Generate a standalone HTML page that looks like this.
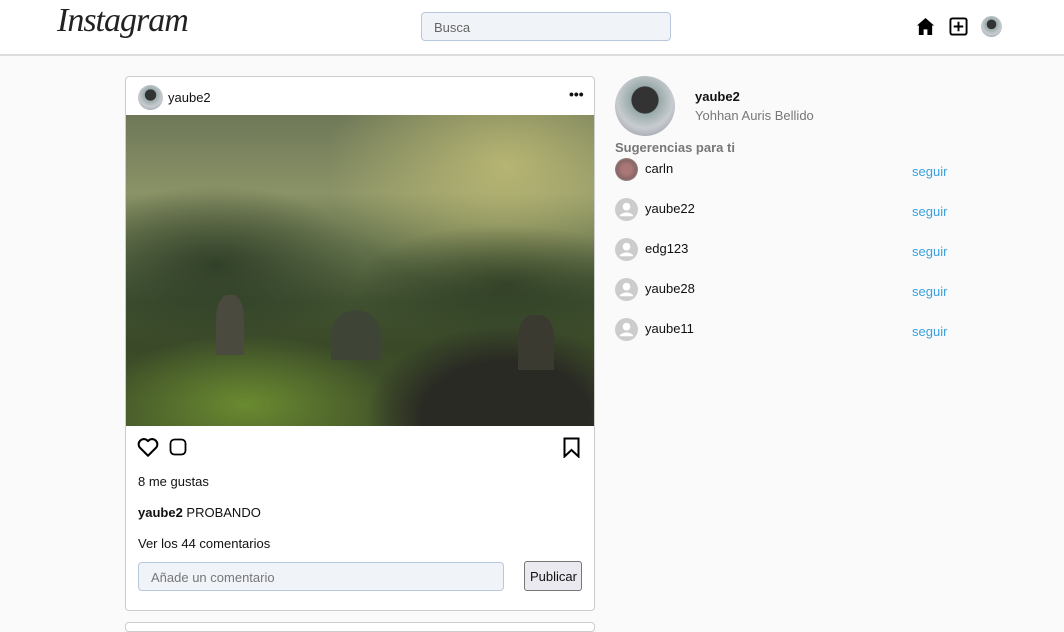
<!DOCTYPE html>
<html><head><meta charset="utf-8"><style>
*{box-sizing:border-box;margin:0;padding:0}
body{width:1064px;height:626px;overflow:hidden;background:#fafafa;font-family:"Liberation Sans",sans-serif;font-size:13px;color:#111;position:relative}
.nav{position:absolute;left:0;top:0;width:1064px;height:56px;background:#fff;border-bottom:2px solid #ddd}
.logo{position:absolute;left:57px;top:2px;font-family:"Liberation Serif",serif;font-style:italic;font-size:34px;color:#222;letter-spacing:-1px}
.search{position:absolute;left:421px;top:12px;width:250px;height:29px;border:1px solid #b8c8dc;border-radius:4px;background:#f0f3f8;padding:7px 12px;color:#666;font-size:13px}
.av{border-radius:50%;background:radial-gradient(circle at 50% 40%,#333 0 28%,#9aa 30%,#c8ccd0 60%,#889 100%)}
.card{position:absolute;left:125px;top:76px;width:470px;height:535px;background:#fff;border:1px solid #ccc;border-radius:4px}
.photo{position:absolute;left:0;top:38px;width:468px;height:311px;background:linear-gradient(180deg,#6e7858 0%,#8a9266 25%,#5f6e48 45%,#3f5030 60%,#3a4a28 75%,#44562a 100%);overflow:hidden}
.s{position:absolute;white-space:nowrap}
.link{color:#3aa0e0}
</style></head><body>
<div class="nav">
<div class="logo">Instagram</div>
<div class="search">Busca</div>
<svg class="s" style="left:916px;top:17px" width="19" height="19" viewBox="0 0 20 20"><path d="M10 1 L19 9 H17 V19 H12 V13 H8 V19 H3 V9 H1 Z" fill="#000"/></svg>
<svg class="s" style="left:949px;top:17px" width="19" height="19" viewBox="0 0 20 20"><rect x="1.5" y="1.5" width="17" height="17" rx="2" fill="none" stroke="#000" stroke-width="2"/><path d="M10 5V15M5 10H15" stroke="#000" stroke-width="2"/></svg>
<div class="s av" style="left:981px;top:16px;width:21px;height:21px"></div>
</div>
<div class="card">
<div class="s av" style="left:12px;top:8px;width:25px;height:25px"></div>
<div class="s" style="left:42px;top:13px">yaube2</div>
<div class="s" style="left:443px;top:9px;font-weight:bold;font-size:14px">•••</div>
<div class="photo">
<div class="s" style="left:200px;top:-80px;width:360px;height:260px;border-radius:50%;background:radial-gradient(closest-side,rgba(200,195,120,.75),rgba(160,160,100,0))"></div>
<div class="s" style="left:-60px;top:70px;width:300px;height:160px;border-radius:50%;background:radial-gradient(closest-side,rgba(40,55,35,.8),rgba(40,55,35,0))"></div>
<div class="s" style="left:230px;top:110px;width:300px;height:120px;border-radius:50%;background:radial-gradient(closest-side,rgba(45,60,35,.8),rgba(45,60,35,0))"></div>
<div class="s" style="left:-30px;top:220px;width:300px;height:140px;border-radius:50%;background:radial-gradient(closest-side,#6a8a30,rgba(80,110,40,0))"></div>
<div class="s" style="left:240px;top:210px;width:280px;height:180px;border-radius:45%;background:radial-gradient(closest-side,#2a2a24 60%,rgba(42,42,36,0))"></div>
<div class="s" style="left:90px;top:180px;width:28px;height:60px;border-radius:40% 40% 0 0;background:#4a4a3e"></div>
<div class="s" style="left:205px;top:195px;width:50px;height:50px;border-radius:50% 50% 0 0;background:#3e4536"></div>
<div class="s" style="left:392px;top:200px;width:36px;height:55px;border-radius:40% 40% 0 0;background:#3a3a30"></div>
</div>
<svg class="s" style="left:11px;top:360px" width="22" height="21" viewBox="0 0 24 22"><path d="M12 20 L3 11 A5 5 0 0 1 12 4 A5 5 0 0 1 21 11 Z" fill="none" stroke="#000" stroke-width="2.2" stroke-linejoin="round"/></svg>
<svg class="s" style="left:43px;top:361px" width="18" height="18" viewBox="0 0 18 18"><rect x="1.5" y="1.5" width="15" height="15" rx="4" fill="none" stroke="#000" stroke-width="1.8"/></svg>
<svg class="s" style="left:437px;top:360px" width="17" height="21" viewBox="0 0 17 21"><path d="M1.5 1.5H15.5V19.5L8.5 13L1.5 19.5Z" fill="none" stroke="#000" stroke-width="2"/></svg>
<div class="s" style="left:12px;top:397px">8 me gustas</div>
<div class="s" style="left:12px;top:428px"><b>yaube2</b> PROBANDO</div>
<div class="s" style="left:12px;top:459px">Ver los 44 comentarios</div>
<div class="s" style="left:12px;top:485px;width:366px;height:29px;border:1px solid #b8c8dc;border-radius:4px;background:#f0f3f8;padding:7px 12px;color:#777">Añade un comentario</div>
<div class="s" style="left:398px;top:484px;width:58px;height:30px;border:1px solid #777;border-radius:3px;background:#e9e9ef;padding:7px 5px">Publicar</div>
</div>
<div class="s" style="left:125px;top:622px;width:470px;height:10px;background:#fff;border:1px solid #ccc;border-radius:4px"></div>
<div class="s av" style="left:615px;top:76px;width:60px;height:60px"></div>
<div class="s" style="left:695px;top:89px;font-weight:bold">yaube2</div>
<div class="s" style="left:695px;top:108px;color:#777">Yohhan Auris Bellido</div>
<div class="s" style="left:615px;top:140px;color:#777;font-weight:bold">Sugerencias para ti</div>
<div class="s av" style="left:615px;top:158px;width:23px;height:23px;background:radial-gradient(circle,#a77 0 30%,#866 60%,#ccc 100%)"></div>
<div class="s" style="left:645px;top:161px">carln</div><div class="s link" style="left:912px;top:164px">seguir</div>
<svg class="s" style="left:615px;top:198px" width="23" height="23" viewBox="0 0 24 24"><circle cx="12" cy="12" r="12" fill="#ccc"/><circle cx="12" cy="9" r="4" fill="#fff"/><path d="M4.5 19a8 6 0 0 1 15 0" fill="#fff"/></svg>
<div class="s" style="left:645px;top:201px">yaube22</div><div class="s link" style="left:912px;top:204px">seguir</div>
<svg class="s" style="left:615px;top:238px" width="23" height="23" viewBox="0 0 24 24"><circle cx="12" cy="12" r="12" fill="#ccc"/><circle cx="12" cy="9" r="4" fill="#fff"/><path d="M4.5 19a8 6 0 0 1 15 0" fill="#fff"/></svg>
<div class="s" style="left:645px;top:241px">edg123</div><div class="s link" style="left:912px;top:244px">seguir</div>
<svg class="s" style="left:615px;top:278px" width="23" height="23" viewBox="0 0 24 24"><circle cx="12" cy="12" r="12" fill="#ccc"/><circle cx="12" cy="9" r="4" fill="#fff"/><path d="M4.5 19a8 6 0 0 1 15 0" fill="#fff"/></svg>
<div class="s" style="left:645px;top:281px">yaube28</div><div class="s link" style="left:912px;top:284px">seguir</div>
<svg class="s" style="left:615px;top:318px" width="23" height="23" viewBox="0 0 24 24"><circle cx="12" cy="12" r="12" fill="#ccc"/><circle cx="12" cy="9" r="4" fill="#fff"/><path d="M4.5 19a8 6 0 0 1 15 0" fill="#fff"/></svg>
<div class="s" style="left:645px;top:321px">yaube11</div><div class="s link" style="left:912px;top:324px">seguir</div>
</body></html>
